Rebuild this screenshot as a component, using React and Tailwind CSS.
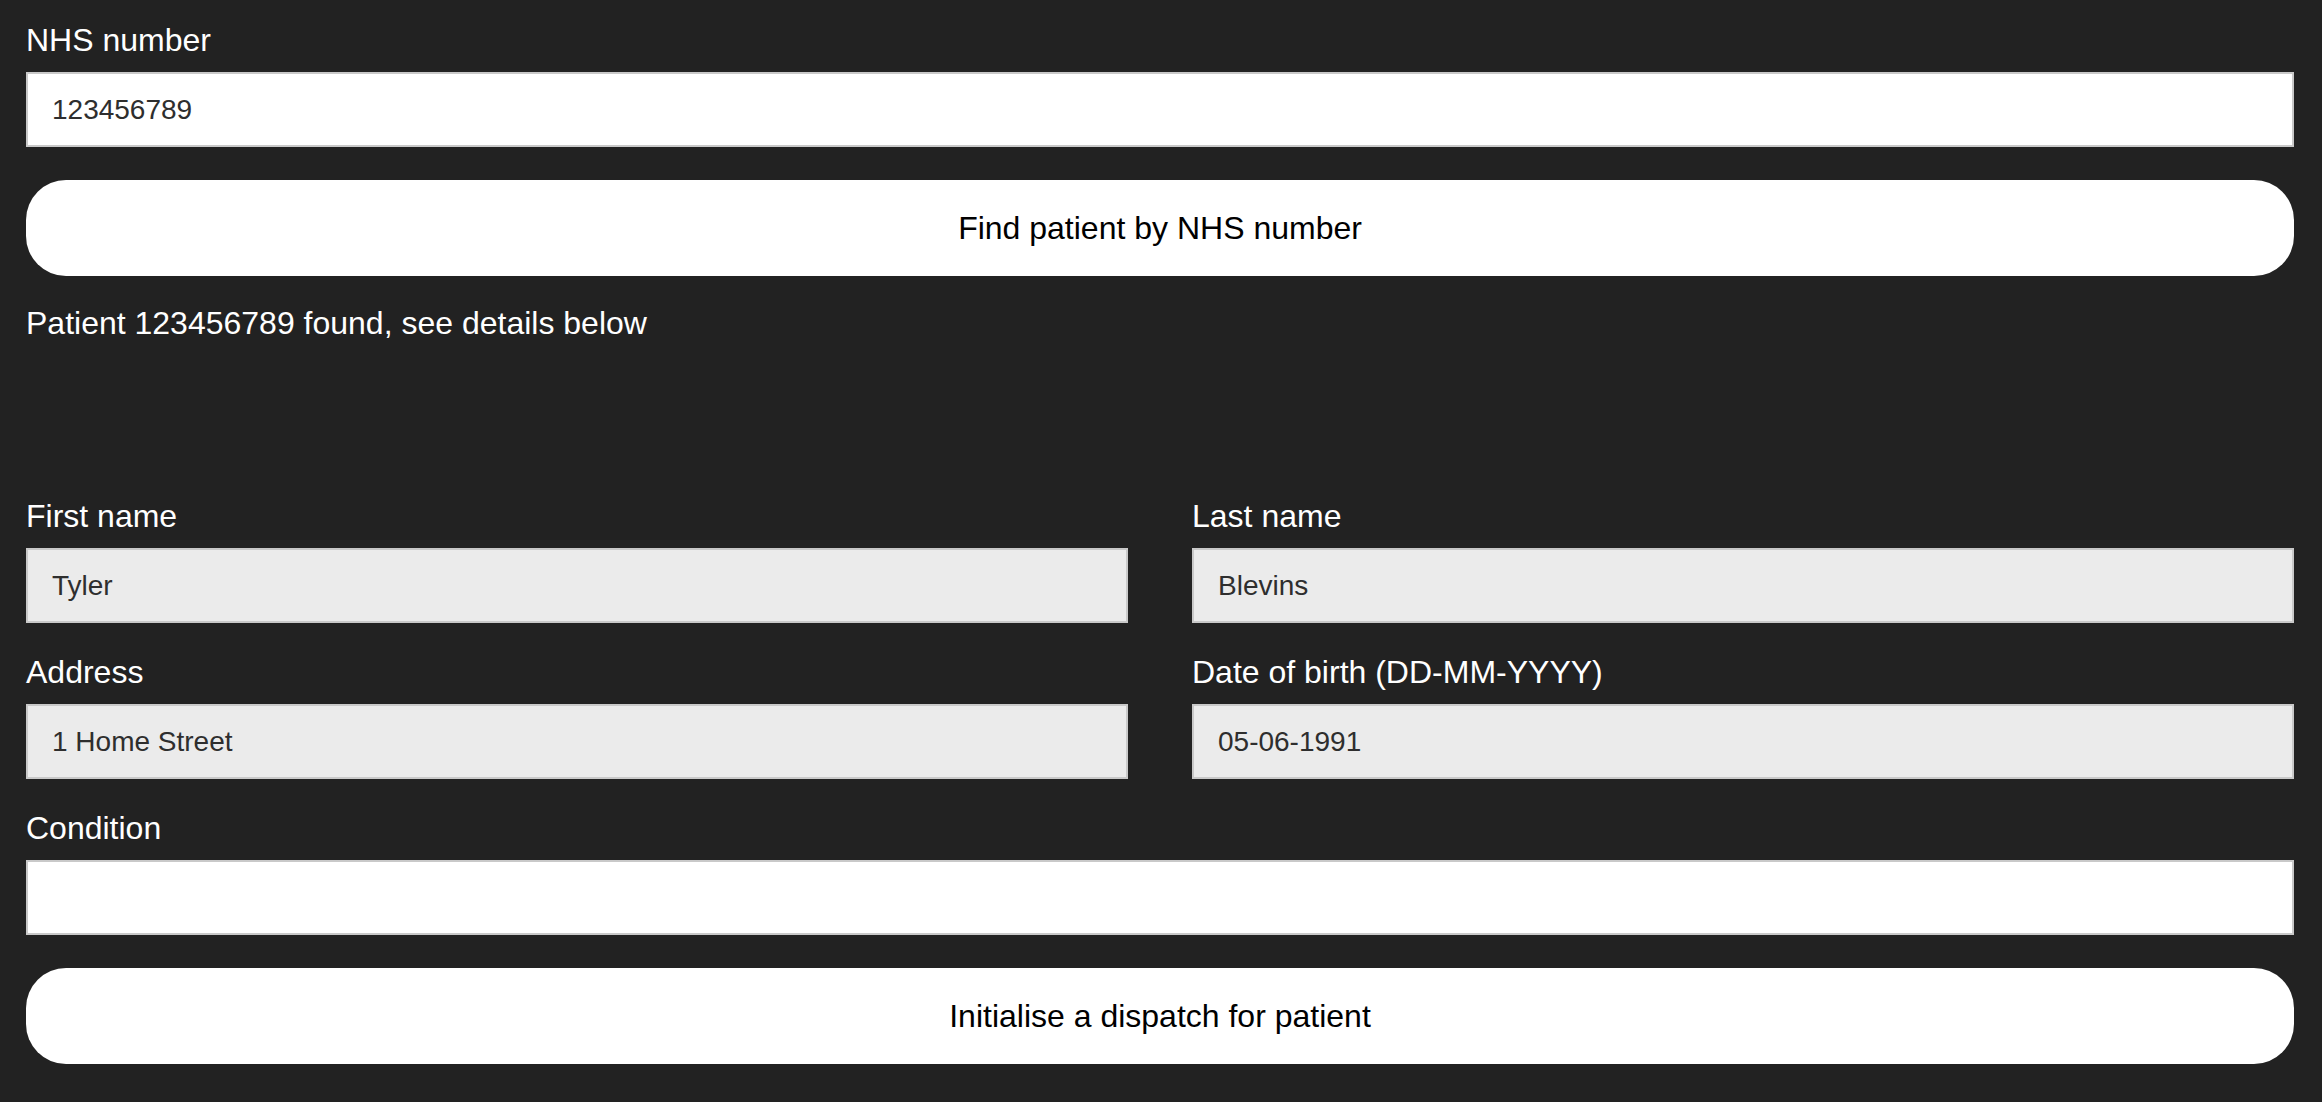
import React from "react";

const font = { fontFamily: '"Liberation Sans", Arial, sans-serif' };

function Field({ label, value, grey }) {
  return (
    <div className="flex flex-col">
      <label className="mb-[13px] text-[32px] leading-[37px] text-white">{label}</label>
      <input
        readOnly
        value={value}
        className={`h-[75px] w-full border-2 border-[#c9c9c9] px-[24px] text-[28px] text-[#2e2e2e] outline-none ${grey ? "bg-[#ebebeb]" : "bg-white"}`}
        style={font}
      />
    </div>
  );
}

export default function App() {
  return (
    <div className="min-h-[1102px] bg-[#222222] pl-[26px] pr-[28px] pt-[22px]" style={font}>
      <Field label="NHS number" value="123456789" />
      <button
        className="mt-[33px] h-[96px] w-full rounded-[40px] bg-white text-[32px] text-black"
        style={font}
      >
        Find patient by NHS number
      </button>
      <p className="mt-[29px] text-[32px] leading-[37px] text-white">
        Patient 123456789 found, see details below
      </p>
      <div className="mt-[156px] grid grid-cols-2 gap-x-[64px] gap-y-[31px]">
        <Field label="First name" value="Tyler" grey />
        <Field label="Last name" value="Blevins" grey />
        <Field label="Address" value="1 Home Street" grey />
        <Field label="Date of birth (DD-MM-YYYY)" value="05-06-1991" grey />
        <div className="col-span-2">
          <Field label="Condition" value="" />
        </div>
      </div>
      <button
        className="mt-[33px] h-[96px] w-full rounded-[40px] bg-white text-[32px] text-black"
        style={font}
      >
        Initialise a dispatch for patient
      </button>
    </div>
  );
}
